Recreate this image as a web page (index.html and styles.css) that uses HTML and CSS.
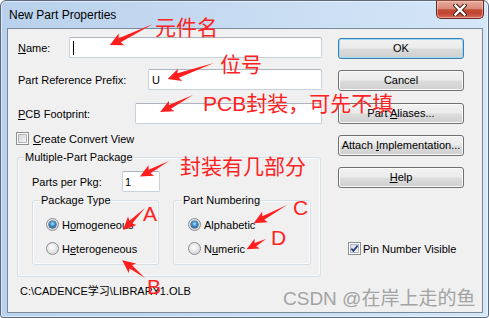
FILE: index.html
```html
<!DOCTYPE html>
<html>
<head>
<meta charset="utf-8">
<title>New Part Properties</title>
<link rel="stylesheet" href="styles.css">
</head>
<body>
<div class="window">
  <div class="titlebar">
    <span class="title">New Part Properties</span>
    <div class="close">
      <svg width="14" height="12" viewBox="0 0 14 12"><path d="M2.5,1.5 L11.5,10.5 M11.5,1.5 L2.5,10.5" stroke="#4a1f18" stroke-width="4.4" stroke-linecap="square"/><path d="M2.5,1.5 L11.5,10.5 M11.5,1.5 L2.5,10.5" stroke="#ffffff" stroke-width="2.4" stroke-linecap="square"/></svg>
    </div>
  </div>
  <div class="client">
    <div class="left">
      <div class="row"><span><u>N</u>ame:</span><div class="input w-name"><span class="caret"></span></div></div>
      <div class="row row-prefix"><span>Part Reference Prefix:</span><div class="input w-prefix">U</div></div>
      <div class="row row-pcb"><span><u>P</u>CB Footprint:</span><div class="input w-pcb"></div></div>
      <div class="check-row"><span class="cb"></span><span><u>C</u>reate Convert View</span></div>
      <div class="group">
        <div class="group-label main-label">Multiple-Part Package</div>
        <div class="pkg-row"><span class="pkg-label">Parts per Pkg:</span><div class="input w-pkg">1</div></div>
        <div class="subgroups">
          <div class="subgroup sub-type">
            <div class="group-label">Package Type</div>
            <div class="radio-row first"><span class="rb on"></span><span>H<u>o</u>mogeneous</span></div>
            <div class="radio-row"><span class="rb"></span><span>H<u>e</u>terogeneous</span></div>
          </div>
          <div class="subgroup sub-num">
            <div class="group-label">Part Numbering</div>
            <div class="radio-row first"><span class="rb on"></span><span>Alphabetic</span></div>
            <div class="radio-row"><span class="rb"></span><span>N<u>u</u>meric</span></div>
          </div>
        </div>
      </div>
      <div class="path">C:\CADENCE学习\LIBRARY1.OLB</div>
    </div>
    <div class="right">
      <div class="btn default"><span>OK</span></div>
      <div class="btn b-cancel"><span>Cancel</span></div>
      <div class="btn b-alias"><span>Part <u>A</u>liases...</span></div>
      <div class="btn b-attach"><span>Attach <u>I</u>mplementation...</span></div>
      <div class="btn b-help"><span><u>H</u>elp</span></div>
      <div class="check-row pin"><span class="cb checked"><svg width="9" height="9" viewBox="0 0 9 9"><path d="M1.3,4.6 L3.4,6.9 L7.6,1.6" fill="none" stroke="#2c3f7c" stroke-width="1.7"/></svg></span><span>Pin Number Visible</span></div>
    </div>
  </div>
</div>
<svg class="annot" width="489" height="318" viewBox="0 0 489 318">
  <g fill="#ff1e1e">
    <path transform="translate(153,24) rotate(154)" d="M0,0 L37,-2.3 L35,-6.5 L48,0 L35,6.5 L37,2.3 Z"/>
    <path transform="translate(214,63) rotate(160.8)" d="M0,0 L38,-2.3 L36,-6.5 L49,0 L36,6.5 L38,2.3 Z"/>
    <path transform="translate(193,95) rotate(152.7)" d="M0,0 L26,-2.1 L24,-6 L37,0 L24,6 L26,2.1 Z"/>
    <path transform="translate(169,161) rotate(151.8)" d="M0,0 L22,-2 L20,-6 L33,0 L20,6 L22,2 Z"/>
    <path transform="translate(145,208) rotate(135)" d="M0,0 L20,-2 L18,-6 L31,0 L18,6 L20,2 Z"/>
    <path transform="translate(145,278) rotate(218)" d="M0,0 L18,-2 L16,-6 L29,0 L16,6 L18,2 Z"/>
    <path transform="translate(287,205) rotate(151.4)" d="M0,0 L27,-2 L25,-6 L38,0 L25,6 L27,2 Z"/>
    <path transform="translate(266,239) rotate(152)" d="M0,0 L12,-1.8 L10,-5.5 L22,0 L10,5.5 L12,1.8 Z"/>
  </g>
  <g class="anno">
    <text x="155" y="35">元件名</text>
    <text x="220" y="72">位号</text>
    <text x="203" y="111">PCB封装，可先不填</text>
    <text x="180" y="174">封装有几部分</text>
    <text x="143" y="221">A</text>
    <text x="147" y="294">B</text>
    <text x="293" y="215">C</text>
    <text x="271" y="245">D</text>
  </g>
  <text class="wm" x="283" y="305">CSDN @在岸上走的鱼</text>
</svg>
</body>
</html>
```

FILE: styles.css
```css
* { box-sizing: border-box; }
html, body { margin: 0; padding: 0; }
body {
  width: 489px;
  height: 318px;
  overflow: hidden;
  background: #ffffff;
  font-family: "Liberation Sans", Arial, "Noto Sans CJK SC", sans-serif;
  font-size: 11px;
  color: #000;
  position: relative;
}
u { text-decoration: underline; text-underline-offset: 1px; }

.window {
  width: 489px;
  height: 318px;
  border: 1px solid #5c6b7b;
  border-radius: 6px 6px 3px 3px;
  background: linear-gradient(to right, #b9d1ec, #d5e6f8);
  box-shadow: inset 0 0 0 1px rgba(255,255,255,0.5);
  padding: 0 5px 4px 6px;
  display: flex;
  flex-direction: column;
}

.titlebar {
  height: 27px;
  display: flex;
  align-items: center;
  flex: none;
}
.title {
  flex: 1;
  padding-left: 2px;
  font-size: 12px;
  color: #000;
}
.close {
  align-self: flex-start;
  margin-top: -1px;
  margin-right: -1px;
  width: 48px;
  height: 19px;
  border: 1px solid #6b2a22;
  border-top-color: #8a4a40;
  border-radius: 0 0 5px 5px;
  background: linear-gradient(#e6ab9c 0%, #d98a78 45%, #c34a36 52%, #c24632 75%, #d5705c 100%);
  box-shadow: inset 0 0 0 1px rgba(255,220,210,0.45);
  display: flex;
  align-items: center;
  justify-content: center;
}

.client {
  flex: 1;
  border: 1px solid #7b8a9b;
  background: #f0f0f0;
  display: flex;
  padding: 8px 0 0 9px;
}

.left {
  width: 305px;
  display: flex;
  flex-direction: column;
}
.row {
  height: 21px;
  display: flex;
  align-items: center;
  justify-content: space-between;
  padding-left: 1px;
}
.row-prefix { margin-top: 11px; }
.row-pcb { margin-top: 13px; }

.input {
  height: 21px;
  background: #fff;
  border: 1px solid #c8d1db;
  border-top-color: #adb4bd;
  border-radius: 2px;
  display: flex;
  align-items: center;
  padding-left: 3px;
}
.w-name { width: 253px; }
.w-prefix { width: 174px; }
.w-pcb { width: 187px; }
.w-pkg { width: 38px; padding-left: 2px; }
.caret {
  display: block;
  width: 1px;
  height: 14px;
  background: #000;
}

.check-row {
  display: flex;
  align-items: center;
  gap: 4px;
  height: 13px;
  margin-top: 8px;
  margin-left: -1px;
}
.cb {
  width: 13px;
  height: 13px;
  flex: none;
  border: 1px solid #8e8f8f;
  background: #fff;
  padding: 1px;
  display: flex;
}
.cb::before {
  content: "";
  flex: 1;
  border: 1px solid #b4b8bd;
  background: linear-gradient(135deg, #d2d4d8, #f6f6f6);
}
.cb.checked { position: relative; }
.cb.checked::before {
  border-color: #a9b6c8;
  background: linear-gradient(135deg, #d6e0ee, #f4f6fa);
}
.cb.checked svg {
  position: absolute;
  left: 1px;
  top: 1px;
}

.group {
  margin-top: 12px;
  width: 304px;
  border: 1px solid #d5dfe5;
  border-radius: 3px;
  box-shadow: inset 0 0 0 1px #fafbfc;
  padding-bottom: 11px;
  display: flex;
  flex-direction: column;
  align-items: flex-start;
}
.group-label {
  margin-top: -7px;
  height: 13px;
  line-height: 13px;
  padding: 0 1px;
  background: #f0f0f0;
  margin-left: 7px;
}
.main-label { margin-left: 6px; }

.pkg-row {
  display: flex;
  align-items: center;
  height: 21px;
  margin-top: 7px;
  margin-left: 14px;
}
.pkg-label { width: 90px; }

.subgroups {
  display: flex;
  gap: 14px;
  margin-top: 8px;
  margin-left: 14px;
}
.subgroup {
  height: 65px;
  border: 1px solid #d5dfe5;
  border-radius: 3px;
  box-shadow: inset 0 0 0 1px #fafbfc;
  display: flex;
  flex-direction: column;
  align-items: flex-start;
}
.sub-type { width: 127px; }
.sub-num { width: 138px; }
.sub-num .group-label { margin-left: 8px; }
.sub-num .radio-row { margin-left: 14px; }

.radio-row {
  display: flex;
  align-items: center;
  gap: 3px;
  height: 13px;
  margin-top: 11px;
  margin-left: 13px;
}
.rb {
  width: 13px;
  height: 13px;
  flex: none;
  border-radius: 50%;
  border: 1px solid #8a8d90;
  background: radial-gradient(circle at 45% 40%, #ffffff 0%, #e8e8e8 45%, #c9cbcd 100%);
  display: flex;
  align-items: center;
  justify-content: center;
}
.rb.on::after {
  content: "";
  width: 7px;
  height: 7px;
  border-radius: 50%;
  background: radial-gradient(circle at 50% 40%, #b5e4ff 0%, #4296d6 40%, #1c4f7d 85%);
  box-shadow: 0 0 0 0.5px #153a5c;
}

.path {
  margin-top: 8px;
  margin-left: 3px;
  height: 13px;
  line-height: 13px;
}

.right {
  width: 126px;
  margin-left: 16px;
  padding-top: 1px;
  display: flex;
  flex-direction: column;
}
.btn {
  height: 21px;
  border: 1px solid #707070;
  border-radius: 3px;
  background: linear-gradient(#f2f2f2 0%, #ebebeb 48%, #dcdcdc 52%, #cfcfcf 100%);
  box-shadow: inset 0 0 0 1px #fbfbfb;
  display: flex;
  align-items: center;
  justify-content: center;
  line-height: 13px;
}
.btn.default {
  border-color: #3c7fb1;
  box-shadow: inset 0 0 0 1px #9ed9f5;
}
.b-cancel { margin-top: 11px; }
.b-alias { margin-top: 12px; }
.b-attach { margin-top: 11px; }
.b-help { margin-top: 11px; }
.pin {
  margin-top: 54px;
  margin-left: 10px;
  gap: 2px;
}

.annot {
  position: absolute;
  left: 0;
  top: 0;
  pointer-events: none;
}
.anno text {
  fill: #ff2222;
  font-family: "Liberation Sans", Arial, "Noto Sans CJK SC", sans-serif;
  font-size: 21px;
}
.wm {
  fill: #a3a3a3;
  font-family: "Liberation Sans", Arial, "Noto Sans CJK SC", sans-serif;
  font-size: 19px;
}
```
